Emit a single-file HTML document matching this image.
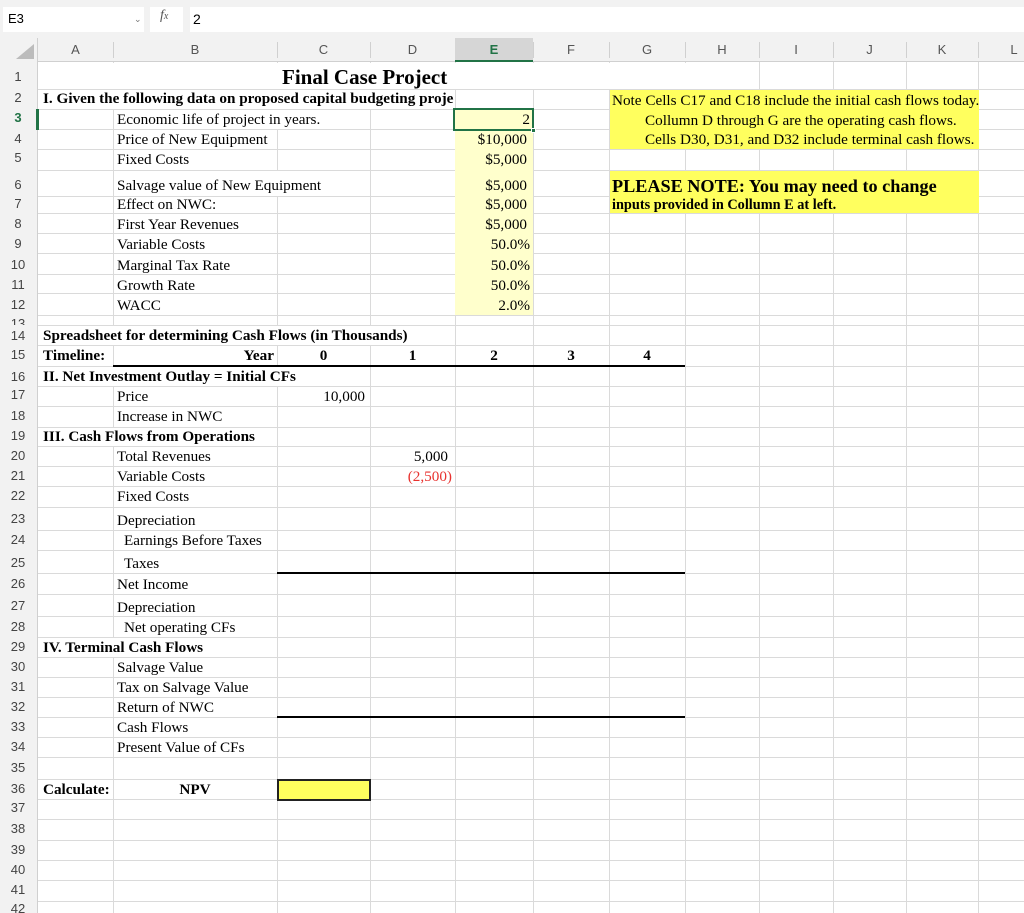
<!DOCTYPE html>
<html><head><meta charset="utf-8"><style>
*{margin:0;padding:0;box-sizing:border-box}
body{width:1024px;height:913px;position:relative;overflow:hidden;background:#fff;font-family:"Liberation Serif",serif;font-size:15.2px;color:#000}
div{position:absolute}
.h{left:38px;width:986px;height:1px;background:#dadada}
.v{top:62px;width:1px;height:851px;background:#dadada}
.w{background:#fff}
.t{white-space:nowrap;line-height:20px}
.b{font-weight:bold}
.ch{top:38px;height:24px;font-family:"Liberation Sans",sans-serif;font-size:13px;color:#555;text-align:center;line-height:24px}
.rn{left:0;width:36px;text-align:center;font-family:"Liberation Sans",sans-serif;font-size:13px;color:#444;line-height:20px}
.r{text-align:right}
.thick{height:2px;background:#000}
.n{font-size:15.2px;line-height:19px}
</style></head><body>
<div style="left:0;top:0;width:1024px;height:38px;background:#f2f2f2"></div>
<div style="left:3px;top:7px;width:141px;height:25px;background:#fff"></div>
<div class="t" style="left:8px;top:9px;font-family:'Liberation Sans',sans-serif;font-size:13px">E3</div>
<div style="left:134px;top:14px;font-size:9px;color:#777;font-family:'Liberation Sans',sans-serif">&#8964;</div>
<div style="left:150px;top:7px;width:33px;height:25px;background:#fff"></div>
<div style="left:160px;top:8px;font-style:italic;font-size:14px;color:#555">f<span style="font-size:10px">x</span></div>
<div style="left:190px;top:7px;width:834px;height:25px;background:#fff"></div>
<div class="t" style="left:193px;top:9px;font-family:'Liberation Sans',sans-serif;font-size:14px">2</div>
<div style="left:0;top:38px;width:1024px;height:24px;background:#f2f2f2;border-bottom:1px solid #d0d0d0"></div>
<div style="left:0;top:38px;width:38px;height:875px;background:#f2f2f2;border-right:1px solid #d0d0d0"></div>
<div style="left:16px;top:44px;width:0;height:0;border-left:18px solid transparent;border-bottom:15px solid #bcbcbc"></div>
<div style="left:455px;top:38px;width:78px;height:24px;background:#d6d6d6;border-bottom:2px solid #217346"></div>
<div class="ch" style="left:38px;width:75px">A</div>
<div class="ch" style="left:113px;width:164px">B</div>
<div class="ch" style="left:277px;width:93px">C</div>
<div class="ch" style="left:370px;width:85px">D</div>
<div class="ch" style="left:455px;width:78px;color:#217346;font-weight:bold">E</div>
<div class="ch" style="left:533px;width:76px">F</div>
<div class="ch" style="left:609px;width:76px">G</div>
<div class="ch" style="left:685px;width:74px">H</div>
<div class="ch" style="left:759px;width:74px">I</div>
<div class="ch" style="left:833px;width:73px">J</div>
<div class="ch" style="left:906px;width:72px">K</div>
<div class="ch" style="left:978px;width:72px">L</div>
<div style="left:113px;top:42px;width:1px;height:16px;background:#d0d0d0"></div>
<div style="left:277px;top:42px;width:1px;height:16px;background:#d0d0d0"></div>
<div style="left:370px;top:42px;width:1px;height:16px;background:#d0d0d0"></div>
<div style="left:533px;top:42px;width:1px;height:16px;background:#d0d0d0"></div>
<div style="left:609px;top:42px;width:1px;height:16px;background:#d0d0d0"></div>
<div style="left:685px;top:42px;width:1px;height:16px;background:#d0d0d0"></div>
<div style="left:759px;top:42px;width:1px;height:16px;background:#d0d0d0"></div>
<div style="left:833px;top:42px;width:1px;height:16px;background:#d0d0d0"></div>
<div style="left:906px;top:42px;width:1px;height:16px;background:#d0d0d0"></div>
<div style="left:978px;top:42px;width:1px;height:16px;background:#d0d0d0"></div>
<div class="v" style="left:113px"></div><div class="v" style="left:277px"></div><div class="v" style="left:370px"></div><div class="v" style="left:455px"></div><div class="v" style="left:533px"></div><div class="v" style="left:609px"></div><div class="v" style="left:685px"></div><div class="v" style="left:759px"></div><div class="v" style="left:833px"></div><div class="v" style="left:906px"></div><div class="v" style="left:978px"></div>
<div class="h" style="top:89px"></div><div class="h" style="top:109px"></div><div class="h" style="top:129px"></div><div class="h" style="top:149px"></div><div class="h" style="top:170px"></div><div class="h" style="top:196px"></div><div class="h" style="top:213px"></div><div class="h" style="top:233px"></div><div class="h" style="top:253px"></div><div class="h" style="top:274px"></div><div class="h" style="top:293px"></div><div class="h" style="top:315px"></div><div class="h" style="top:325px"></div><div class="h" style="top:345px"></div><div class="h" style="top:366px"></div><div class="h" style="top:386px"></div><div class="h" style="top:406px"></div><div class="h" style="top:427px"></div><div class="h" style="top:446px"></div><div class="h" style="top:466px"></div><div class="h" style="top:486px"></div><div class="h" style="top:507px"></div><div class="h" style="top:530px"></div><div class="h" style="top:550px"></div><div class="h" style="top:573px"></div><div class="h" style="top:594px"></div><div class="h" style="top:616px"></div><div class="h" style="top:637px"></div><div class="h" style="top:657px"></div><div class="h" style="top:677px"></div><div class="h" style="top:697px"></div><div class="h" style="top:717px"></div><div class="h" style="top:737px"></div><div class="h" style="top:757px"></div><div class="h" style="top:779px"></div><div class="h" style="top:799px"></div><div class="h" style="top:819px"></div><div class="h" style="top:840px"></div><div class="h" style="top:860px"></div><div class="h" style="top:880px"></div><div class="h" style="top:901px"></div>
<div class="w" style="left:39px;top:63px;width:719px;height:26px"></div>
<div class="w" style="left:39px;top:90px;width:415px;height:19px"></div>
<div class="w" style="left:276px;top:110px;width:4px;height:19px"></div>
<div class="w" style="left:276px;top:171px;width:4px;height:25px"></div>
<div class="w" style="left:39px;top:326px;width:415px;height:19px"></div>
<div class="w" style="left:39px;top:367px;width:330px;height:19px"></div>
<div class="w" style="left:39px;top:428px;width:237px;height:18px"></div>
<div class="w" style="left:39px;top:638px;width:237px;height:19px"></div>
<div style="left:455px;top:110px;width:78px;height:205px;background:#ffffcc"></div>
<div style="left:610px;top:90px;width:369px;height:59px;background:#ffff5e"></div>
<div style="left:610px;top:171px;width:369px;height:42px;background:#ffff5e"></div>
<div style="left:277px;top:779px;width:94px;height:22px;background:#ffff5e;border:2px solid #222"></div>
<div style="left:453px;top:108px;width:81px;height:23px;border:2px solid #217346"></div>
<div style="left:531px;top:128px;width:5px;height:5px;background:#217346;border:1px solid #fff"></div>
<div class="thick" style="left:113px;top:365px;width:572px"></div>
<div class="thick" style="left:277px;top:572px;width:408px;height:1.5px"></div>
<div class="thick" style="left:277px;top:716px;width:408px;height:1.5px"></div>
<div style="left:36px;top:109px;width:3px;height:21px;background:#217346"></div>
<div class="rn" style="top:67px">1</div><div class="rn" style="top:88px">2</div><div class="rn" style="top:108px;color:#217346;font-weight:bold">3</div><div class="rn" style="top:129px">4</div><div class="rn" style="top:148px">5</div><div class="rn" style="top:175px">6</div><div class="rn" style="top:194px">7</div><div class="rn" style="top:214px">8</div><div class="rn" style="top:234px">9</div><div class="rn" style="top:255px">10</div><div class="rn" style="top:275px">11</div><div class="rn" style="top:295px">12</div><div class="rn" style="top:314px;height:11px;overflow:hidden">13</div><div class="rn" style="top:326px">14</div><div class="rn" style="top:345px">15</div><div class="rn" style="top:367px">16</div><div class="rn" style="top:385px">17</div><div class="rn" style="top:406px">18</div><div class="rn" style="top:426px">19</div><div class="rn" style="top:446px">20</div><div class="rn" style="top:466px">21</div><div class="rn" style="top:486px">22</div><div class="rn" style="top:509px">23</div><div class="rn" style="top:530px">24</div><div class="rn" style="top:553px">25</div><div class="rn" style="top:574px">26</div><div class="rn" style="top:596px">27</div><div class="rn" style="top:617px">28</div><div class="rn" style="top:637px">29</div><div class="rn" style="top:657px">30</div><div class="rn" style="top:677px">31</div><div class="rn" style="top:697px">32</div><div class="rn" style="top:717px">33</div><div class="rn" style="top:737px">34</div><div class="rn" style="top:758px">35</div><div class="rn" style="top:779px">36</div><div class="rn" style="top:798px">37</div><div class="rn" style="top:819px">38</div><div class="rn" style="top:840px">39</div><div class="rn" style="top:860px">40</div><div class="rn" style="top:880px">41</div><div class="rn" style="top:899px;height:14px;overflow:hidden">42</div>
<div class="t b" style="left:282px;top:65px;font-size:21px;line-height:24px">Final Case Project</div>
<div class="t b" style="left:43px;top:89px;width:411px;overflow:hidden">I. Given the following data on proposed capital budgeting project</div>
<div class="t" style="left:117px;top:110px">Economic life of project in years.</div>
<div class="t" style="left:117px;top:130px">Price of New Equipment</div>
<div class="t" style="left:117px;top:150px">Fixed Costs</div>
<div class="t" style="left:117px;top:176px">Salvage value of New Equipment</div>
<div class="t" style="left:117px;top:195px">Effect on NWC:</div>
<div class="t" style="left:117px;top:215px">First Year Revenues</div>
<div class="t" style="left:117px;top:235px">Variable Costs</div>
<div class="t" style="left:117px;top:256px">Marginal Tax Rate</div>
<div class="t" style="left:117px;top:276px">Growth Rate</div>
<div class="t" style="left:117px;top:296px">WACC</div>
<div class="t r" style="left:455px;width:75px;top:110px">2</div>
<div class="t r" style="left:455px;width:72px;top:130px">$10,000</div>
<div class="t r" style="left:455px;width:72px;top:150px">$5,000</div>
<div class="t r" style="left:455px;width:72px;top:176px">$5,000</div>
<div class="t r" style="left:455px;width:72px;top:195px">$5,000</div>
<div class="t r" style="left:455px;width:72px;top:215px">$5,000</div>
<div class="t r" style="left:455px;width:75px;top:235px">50.0%</div>
<div class="t r" style="left:455px;width:75px;top:256px">50.0%</div>
<div class="t r" style="left:455px;width:75px;top:276px">50.0%</div>
<div class="t r" style="left:455px;width:75px;top:296px">2.0%</div>
<div class="t n" style="left:612px;top:91px">Note Cells C17 and C18 include the initial cash flows today.</div>
<div class="t n" style="left:645px;top:111px">Collumn D through G are the operating cash flows.</div>
<div class="t n" style="left:645px;top:130px">Cells D30, D31, and D32 include terminal cash flows.</div>
<div class="t b" style="left:612px;top:176px;font-size:18.2px">PLEASE NOTE: You may need to change</div>
<div class="t b" style="left:612px;top:196px;font-size:14.3px;line-height:18px">inputs provided in Collumn E at left.</div>
<div class="t b" style="left:43px;top:326px">Spreadsheet for determining Cash Flows (in Thousands)</div>
<div class="t b" style="left:43px;top:346px">Timeline:</div>
<div class="t b r" style="left:113px;width:161px;top:346px">Year</div>
<div class="t b" style="left:277px;width:93px;top:346px;text-align:center">0</div>
<div class="t b" style="left:370px;width:85px;top:346px;text-align:center">1</div>
<div class="t b" style="left:455px;width:78px;top:346px;text-align:center">2</div>
<div class="t b" style="left:533px;width:76px;top:346px;text-align:center">3</div>
<div class="t b" style="left:609px;width:76px;top:346px;text-align:center">4</div>
<div class="t b" style="left:43px;top:367px">II. Net Investment Outlay = Initial CFs</div>
<div class="t" style="left:117px;top:387px">Price</div>
<div class="t r" style="left:277px;width:88px;top:387px">10,000</div>
<div class="t" style="left:117px;top:407px">Increase in NWC</div>
<div class="t b" style="left:43px;top:427px">III. Cash Flows from Operations</div>
<div class="t" style="left:117px;top:447px">Total Revenues</div>
<div class="t r" style="left:370px;width:78px;top:447px">5,000</div>
<div class="t" style="left:117px;top:467px">Variable Costs</div>
<div class="t r" style="left:370px;width:82px;top:467px;color:#e8322f">(2,500)</div>
<div class="t" style="left:117px;top:487px">Fixed Costs</div>
<div class="t" style="left:117px;top:511px">Depreciation</div>
<div class="t" style="left:124px;top:531px">Earnings Before Taxes</div>
<div class="t" style="left:124px;top:554px">Taxes</div>
<div class="t" style="left:117px;top:575px">Net Income</div>
<div class="t" style="left:117px;top:598px">Depreciation</div>
<div class="t" style="left:124px;top:618px">Net operating CFs</div>
<div class="t b" style="left:43px;top:638px">IV. Terminal Cash Flows</div>
<div class="t" style="left:117px;top:658px">Salvage Value</div>
<div class="t" style="left:117px;top:678px">Tax on Salvage Value</div>
<div class="t" style="left:117px;top:698px">Return of NWC</div>
<div class="t" style="left:117px;top:718px">Cash Flows</div>
<div class="t" style="left:117px;top:738px">Present Value of CFs</div>
<div class="t b" style="left:43px;top:780px">Calculate:</div>
<div class="t b" style="left:113px;width:164px;top:780px;text-align:center">NPV</div>
</body></html>
